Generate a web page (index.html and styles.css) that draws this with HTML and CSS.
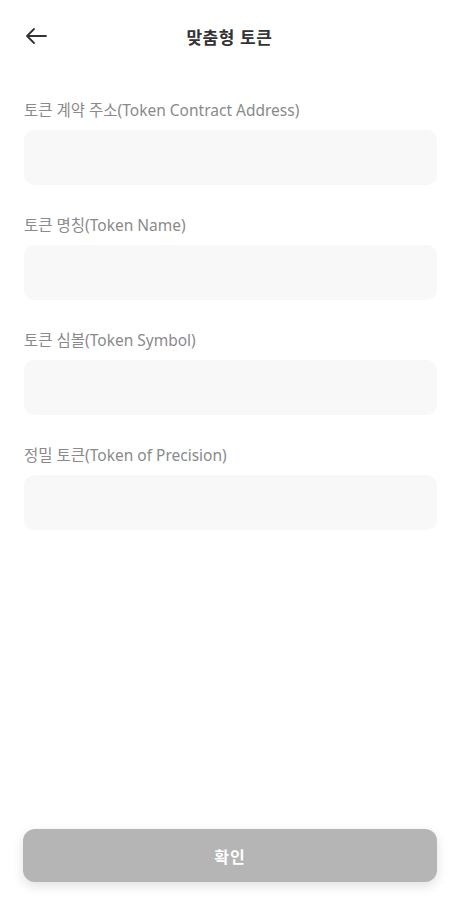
FILE: index.html
```html
<!DOCTYPE html>
<html lang="ko">
<head>
    <meta charset="UTF-8">
    <meta name="viewport" content="width=device-width, initial-scale=1.0">
    <title>맞춤형 토큰</title>
    <link rel="stylesheet" href="styles.css">
</head>
<body>

    <div class="header">
        <button class="back" aria-label="뒤로">
            <svg width="24" height="18" viewBox="0 0 24 18">
                <path d="M22 9H3M10 2L3 9l7 7" fill="none" stroke="#333" stroke-width="1.8" stroke-linecap="round" stroke-linejoin="round"/>
            </svg>
        </button>
        <h1>맞춤형 토큰</h1>
    </div>

    <div class="form">
        <div class="field">
            <label for="address">토큰 계약 주소(Token Contract Address)</label>
            <input type="text" id="address">
        </div>
        <div class="field">
            <label for="name">토큰 명칭(Token Name)</label>
            <input type="text" id="name">
        </div>
        <div class="field">
            <label for="symbol">토큰 심볼(Token Symbol)</label>
            <input type="text" id="symbol">
        </div>
        <div class="field">
            <label for="precision">정밀 토큰(Token of Precision)</label>
            <input type="text" id="precision">
        </div>
    </div>

    <div class="footer">
        <button class="confirm" disabled>확인</button>
    </div>

</body>
</html>
```

FILE: styles.css
```css
body {
    font-family: "Noto Sans", "Noto Sans CJK KR", sans-serif;
    background: #ffffff;
    color: #333333;
    margin: 0;
    padding: 0;
    height: 100vh;
    display: flex;
    flex-direction: column;
}
.header {
    position: relative;
    height: 72px;
    display: flex;
    align-items: center;
    justify-content: center;
}
.header h1 {
    margin: 0;
    font-size: 17px;
    font-weight: 700;
    letter-spacing: 0.6px;
    color: #333333;
}
.back {
    position: absolute;
    left: 24px;
    top: 27px;
    padding: 0;
    border: none;
    background: none;
    cursor: pointer;
}
.form {
    padding: 28px 22px 0 24px;
    display: flex;
    flex-direction: column;
    gap: 30px;
}
.field {
    display: flex;
    flex-direction: column;
    gap: 10px;
}
.field label {
    font-size: 15.5px;
    line-height: 20px;
    color: #8a8a8a;
}
.field input {
    height: 55px;
    box-sizing: border-box;
    border: none;
    border-radius: 10px;
    background: #f8f8f8;
    padding: 0 14px;
    font-size: 15px;
    outline: none;
}
.footer {
    margin-top: auto;
    padding: 0 22px 18px 23px;
}
.confirm {
    width: 100%;
    height: 53px;
    border: none;
    border-radius: 12px;
    background: #b5b5b5;
    color: #ffffff;
    font-family: inherit;
    font-size: 16px;
    font-weight: 700;
    letter-spacing: 1px;
    box-shadow: 0 4px 12px rgba(0, 0, 0, 0.12);
}
```
